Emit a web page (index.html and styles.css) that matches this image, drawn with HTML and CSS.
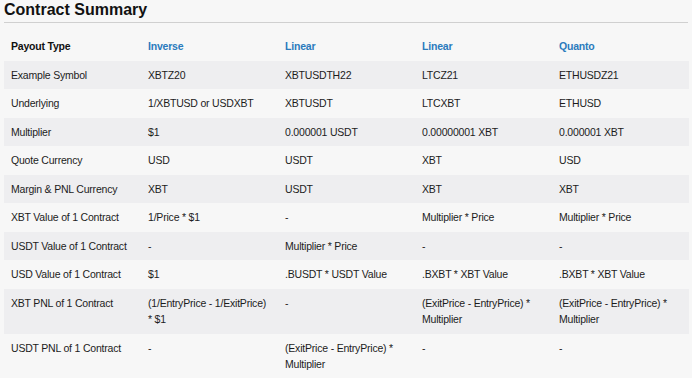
FILE: index.html
```html
<!DOCTYPE html>
<html>
<head>
<meta charset="utf-8">
<link rel="stylesheet" href="styles.css">
</head>
<body>
<div class="page">
  <h1 class="title">Contract Summary</h1>
  <table class="summary">
    <thead>
      <tr>
        <th class="label">Payout Type</th>
        <th class="type">Inverse</th>
        <th class="type">Linear</th>
        <th class="type">Linear</th>
        <th class="type">Quanto</th>
      </tr>
    </thead>
    <tbody>
      <tr><td>Example Symbol</td><td>XBTZ20</td><td>XBTUSDTH22</td><td>LTCZ21</td><td>ETHUSDZ21</td></tr>
      <tr><td>Underlying</td><td>1/XBTUSD or USDXBT</td><td>XBTUSDT</td><td>LTCXBT</td><td>ETHUSD</td></tr>
      <tr><td>Multiplier</td><td>$1</td><td>0.000001 USDT</td><td>0.00000001 XBT</td><td>0.000001 XBT</td></tr>
      <tr><td>Quote Currency</td><td>USD</td><td>USDT</td><td>XBT</td><td>USD</td></tr>
      <tr><td>Margin &amp; PNL Currency</td><td>XBT</td><td>USDT</td><td>XBT</td><td>XBT</td></tr>
      <tr><td>XBT Value of 1 Contract</td><td>1/Price * $1</td><td>-</td><td>Multiplier * Price</td><td>Multiplier * Price</td></tr>
      <tr><td>USDT Value of 1 Contract</td><td>-</td><td>Multiplier * Price</td><td>-</td><td>-</td></tr>
      <tr><td>USD Value of 1 Contract</td><td>$1</td><td>.BUSDT * USDT Value</td><td>.BXBT * XBT Value</td><td>.BXBT * XBT Value</td></tr>
      <tr><td>XBT PNL of 1 Contract</td><td>(1/EntryPrice - 1/ExitPrice) * $1</td><td>-</td><td>(ExitPrice - EntryPrice) * Multiplier</td><td>(ExitPrice - EntryPrice) * Multiplier</td></tr>
      <tr><td>USDT PNL of 1 Contract</td><td>-</td><td>(ExitPrice - EntryPrice) * Multiplier</td><td>-</td><td>-</td></tr>
    </tbody>
  </table>
</div>
</body>
</html>
```

FILE: styles.css
```css
html, body {
  margin: 0;
  padding: 0;
  background: #f7f7f7;
}

body {
  font-family: "Liberation Sans", Arial, Helvetica, sans-serif;
  color: #1c1c1c;
  overflow: hidden;
}

.page {
  padding: 0 4px;
}

.title {
  margin: 0;
  height: 22px;
  width: 684px;
  font-size: 16px;
  line-height: 20px;
  font-weight: bold;
  color: #111;
  border-bottom: 1px solid #d0d0d0;
}

.summary {
  margin-top: 9px;
  width: 685px;
  table-layout: fixed;
  border-collapse: collapse;
  font-size: 10.5px;
  letter-spacing: -0.2px;
  line-height: 16.5px;
}

.summary th,
.summary td {
  padding: 6px 11px 6px 7px;
  text-align: left;
  vertical-align: top;
}

.summary th {
  font-weight: bold;
  color: #111;
}

.summary th.type {
  color: #2b7bbd;
}

.summary tbody tr:nth-child(odd) {
  background: #eeeef0;
}
```
